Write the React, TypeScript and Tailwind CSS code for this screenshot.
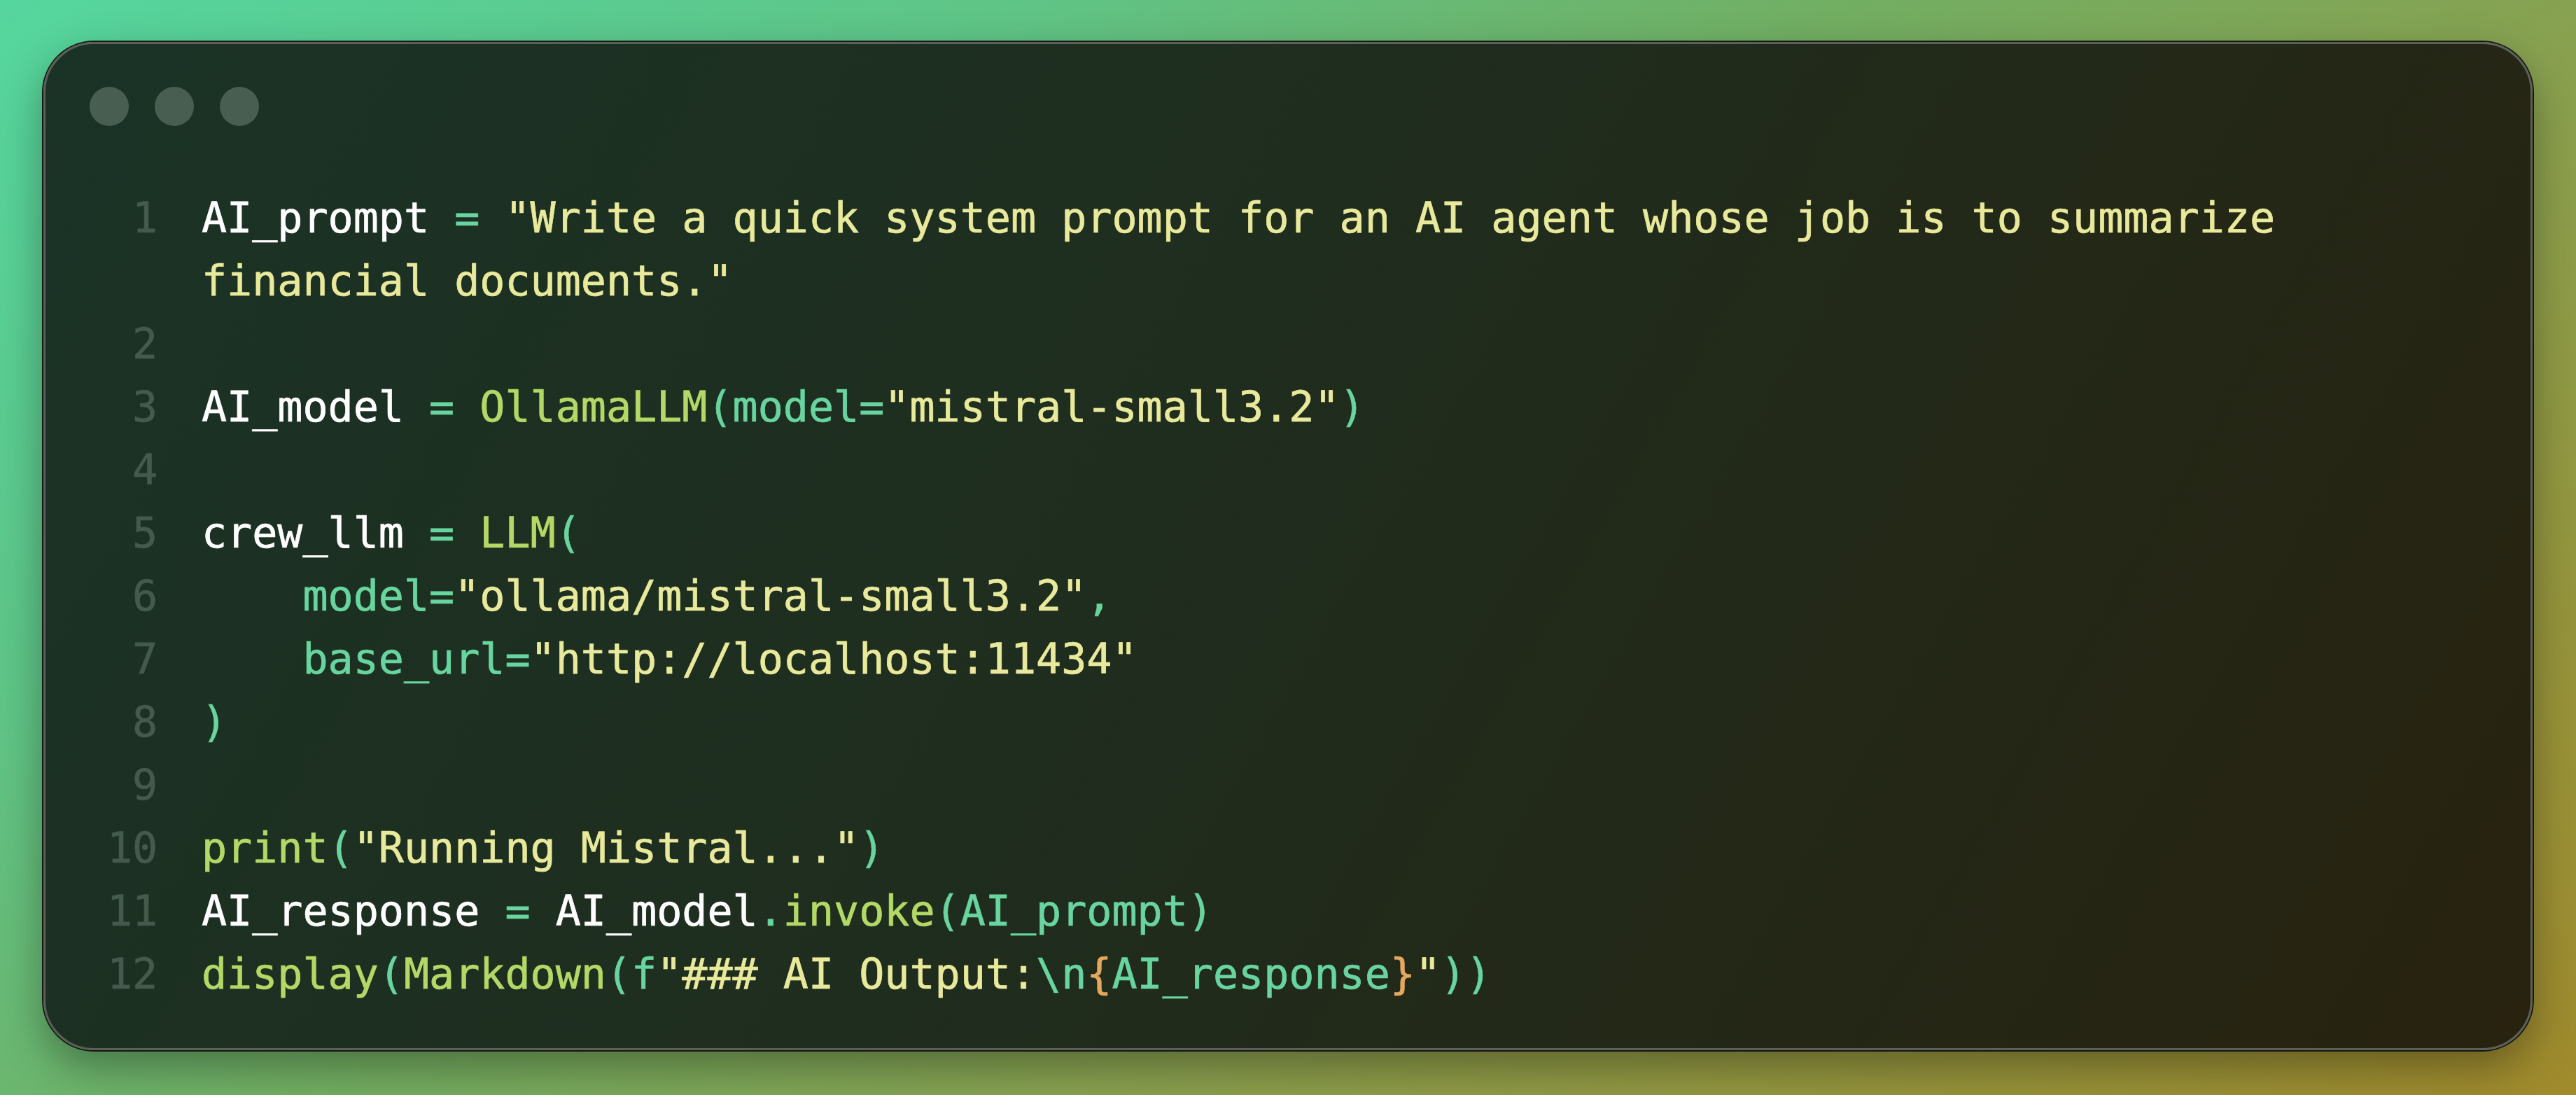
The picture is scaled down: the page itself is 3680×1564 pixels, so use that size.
import React from "react";

type Tok = [string, string];

const W = "text-white";
const OP = "text-[#68d49f]";
const STR = "text-[#e9e99b]";
const FN = "text-[#b4d866]";
const BR = "text-[#e3a85e]";

// null number = wrapped continuation of the previous line
const lines: { n: number | null; toks: Tok[] }[] = [
  { n: 1, toks: [["AI_prompt ", W], ["= ", OP], ['"Write a quick system prompt for an AI agent whose job is to summarize', STR]] },
  { n: null, toks: [['financial documents."', STR]] },
  { n: 2, toks: [] },
  { n: 3, toks: [["AI_model ", W], ["= ", OP], ["OllamaLLM", FN], ["(model=", OP], ['"mistral-small3.2"', STR], [")", OP]] },
  { n: 4, toks: [] },
  { n: 5, toks: [["crew_llm ", W], ["= ", OP], ["LLM", FN], ["(", OP]] },
  { n: 6, toks: [["    model=", OP], ['"ollama/mistral-small3.2"', STR], [",", OP]] },
  { n: 7, toks: [["    base_url=", OP], ['"http://localhost:11434"', STR]] },
  { n: 8, toks: [[")", OP]] },
  { n: 9, toks: [] },
  { n: 10, toks: [["print", FN], ["(", OP], ['"Running Mistral..."', STR], [")", OP]] },
  { n: 11, toks: [["AI_response ", W], ["= ", OP], ["AI_model", W], [".", OP], ["invoke", FN], ["(AI_prompt)", OP]] },
  { n: 12, toks: [["display", FN], ["(", OP], ["Markdown", FN], ["(f", OP], ['"### AI Output:', STR], ["\\n", OP], ["{", BR], ["AI_response", OP], ["}", BR], ['"', STR], ["))", OP]] },
];

export default function App() {
  return (
    <div className="w-full h-screen bg-[linear-gradient(145deg,#55d69e_0%,#5fc486_25%,#72ae62_45%,#8aa04e_65%,#a08a2c_100%)] pl-[62px] pr-[62px] pt-[60px] pb-[64px]">
      <div className="h-full rounded-[72px] border-[3px] border-[#5c6058] bg-[linear-gradient(120deg,#1a3326_0%,#1f2d1e_45%,#28220f_100%)] shadow-[0_0_0_2px_#141813,0_24px_60px_rgba(0,0,0,0.35)] pl-[63px] pr-[215px] pt-[61px]">
        <div className="flex gap-[37px]">
          <div className="w-[56px] h-[56px] rounded-full bg-[#485e51]" />
          <div className="w-[56px] h-[56px] rounded-full bg-[#485e51]" />
          <div className="w-[56px] h-[56px] rounded-full bg-[#485e51]" />
        </div>
        <div className="mt-[86px] pl-[25px] font-['DejaVu_Sans_Mono',monospace] text-[60px] leading-[90px] [-webkit-text-stroke:0.7px]">
          {lines.map((line, i) => (
            <div key={i} className="flex gap-[63px] h-[90px]">
              <span className="w-[72px] shrink-0 text-right text-[#445a4c]">{line.n ?? ""}</span>
              <span className="flex-1 whitespace-pre">
                {line.toks.map(([t, c], j) => (
                  <span key={j} className={c}>{t}</span>
                ))}
              </span>
            </div>
          ))}
        </div>
      </div>
    </div>
  );
}
